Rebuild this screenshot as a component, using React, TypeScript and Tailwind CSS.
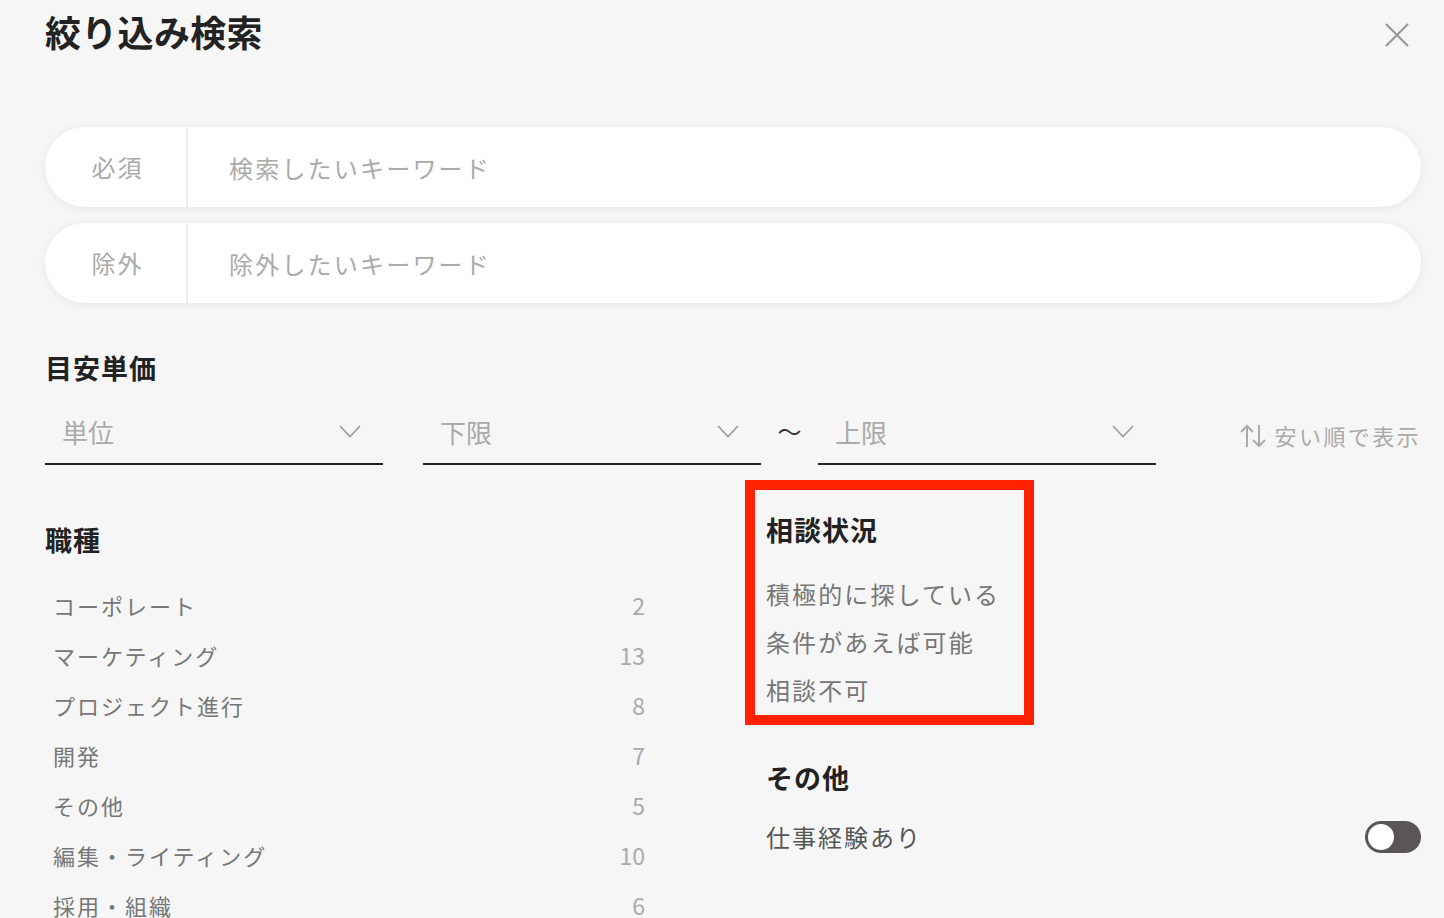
import { useState } from 'react';

const FONT = { fontFamily: '"Noto Sans CJK JP", "Noto Sans", sans-serif' };

const JOBS: [string, number][] = [
  ['コーポレート', 2],
  ['マーケティング', 13],
  ['プロジェクト進行', 8],
  ['開発', 7],
  ['その他', 5],
  ['編集・ライティング', 10],
  ['採用・組織', 6],
];

const STATUS = ['積極的に探している', '条件があえば可能', '相談不可'];

function Chevron() {
  return (
    <svg width="22" height="13" viewBox="0 0 22 13" fill="none" className="shrink-0">
      <polyline points="1,1 11,11.5 21,1" stroke="#9a9a9a" strokeWidth="1.6" />
    </svg>
  );
}

function Select({ label }: { label: string }) {
  return (
    <div className="flex h-[65px] w-[338px] shrink-0 items-center justify-between border-b-2 border-[#222] pl-[17px] pr-[22px]">
      <span className="text-[26px] text-[#aaa]">{label}</span>
      <Chevron />
    </div>
  );
}

function KeywordPill({ label, placeholder }: { label: string; placeholder: string }) {
  return (
    <div className="flex h-[80px] items-center rounded-full bg-white shadow-[0_1px_10px_rgba(0,0,0,0.07)]">
      <div className="flex h-full w-[143px] shrink-0 items-center justify-center border-r-2 border-[#ececec] pl-[4px] text-[24px] tracking-[2px] text-[#aaa]">
        {label}
      </div>
      <input
        placeholder={placeholder}
        className="h-full flex-1 rounded-r-full bg-transparent pl-[41px] text-[24px] tracking-[2.2px] text-[#333] outline-none placeholder:text-[#aaa]"
      />
    </div>
  );
}

export default function App() {
  const [worked, setWorked] = useState(false);

  return (
    <div style={FONT} className="h-[918px] overflow-hidden bg-[#f6f6f6] pl-[45px] pr-[23px] pt-[9px]">
      {/* header */}
      <div className="flex items-start justify-between">
        <h1 className="text-[36px] font-bold leading-[44px] tracking-[0.3px] text-[#222]">絞り込み検索</h1>
        <button className="mr-[11px] mt-[13px] p-0">
          <svg width="26" height="26" viewBox="0 0 26 26" fill="none">
            <line x1="2" y1="2" x2="24" y2="24" stroke="#999" strokeWidth="2.2" />
            <line x1="24" y1="2" x2="2" y2="24" stroke="#999" strokeWidth="2.2" />
          </svg>
        </button>
      </div>

      {/* keywords */}
      <div className="mt-[74px] flex flex-col gap-4">
        <KeywordPill label="必須" placeholder="検索したいキーワード" />
        <KeywordPill label="除外" placeholder="除外したいキーワード" />
      </div>

      {/* price */}
      <h2 className="mt-[45px] text-[27px] font-bold leading-[40px] tracking-[1px] text-[#222]">目安単価</h2>
      <div className="mt-3 flex items-center">
        <Select label="単位" />
        <div className="w-10 shrink-0" />
        <Select label="下限" />
        <div className="flex w-[57px] shrink-0 justify-center pb-1 text-[24px] text-[#333]">〜</div>
        <Select label="上限" />
        <div className="flex flex-1 items-center justify-end gap-[8px] pt-[6px] text-[22px] tracking-[2.4px] text-[#aaa]">
          <svg width="28" height="24" viewBox="0 0 28 24" fill="none">
            <path d="M8 23V2M2 8l6-6 6 6" stroke="#aaa" strokeWidth="2" />
            <path d="M20 1v21M14 16l6 6 6-6" stroke="#aaa" strokeWidth="2" />
          </svg>
          <span>安い順で表示</span>
        </div>
      </div>

      {/* lower columns */}
      <div className="mt-[15px] flex">
        <div className="w-[600px] shrink-0 pt-10">
          <h2 className="text-[27px] font-bold leading-[40px] tracking-[1px] text-[#222]">職種</h2>
          <ul className="mt-[20px]">
            {JOBS.map(([name, count]) => (
              <li key={name} className="flex h-[50px] items-center justify-between pl-2 text-[22px] tracking-[2px]">
                <span className="text-[#777]">{name}</span>
                <span className="text-[23px] tracking-normal text-[#aaa]">{count}</span>
              </li>
            ))}
          </ul>
        </div>

        <div className="ml-[100px] flex-1">
          <div className="w-[289px] border-[10px] border-[#ff2200] pb-px pl-[11px] pt-5">
            <h2 className="text-[27px] font-bold leading-[40px] tracking-[1px] text-[#222]">相談状況</h2>
            <ul className="mt-5">
              {STATUS.map((s) => (
                <li key={s} className="flex h-[48px] items-center text-[24px] tracking-[2.1px] text-[#777]">
                  {s}
                </li>
              ))}
            </ul>
          </div>

          <div className="pl-[21px]">
            <h2 className="mt-[33px] text-[27px] font-bold leading-[40px] tracking-[1px] text-[#222]">その他</h2>
            <div className="mt-[15px] flex h-[48px] items-center justify-between">
              <span className="text-[24px] tracking-[2px] text-[#555]">仕事経験あり</span>
              <button
                onClick={() => setWorked(!worked)}
                className={`flex h-8 w-14 items-center rounded-full bg-[#5b5656] px-[3px] ${worked ? 'justify-end' : 'justify-start'}`}
              >
                <span className="block h-[26px] w-[26px] rounded-full bg-white" />
              </button>
            </div>
          </div>
        </div>
      </div>
    </div>
  );
}
